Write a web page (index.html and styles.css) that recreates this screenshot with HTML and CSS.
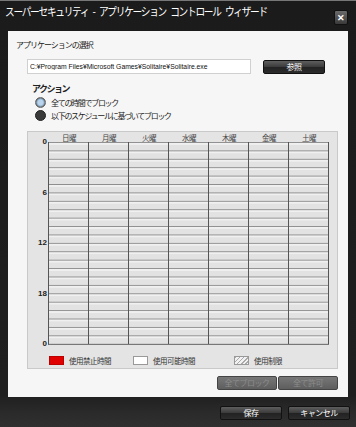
FILE: index.html
```html
<html lang="ja">
<head>
    <meta charset="UTF-8">
    <title>アプリケーション コントロール ウィザード</title>
    <link rel="stylesheet" href="styles.css">
</head>
<body>

<div id="window">
  <div id="titlebar">
    <span class="title">スーパーセキュリティ - アプリケーション コントロール ウィザード</span>
    <span class="close">&#x2715;</span>
  </div>

  <div id="panel">
    <p class="label">アプリケーションの選択</p>
    <div class="pathrow">
      <input type="text" class="path" value="C:¥Program Files¥Microsoft Games¥Solitaire¥Solitaire.exe">
      <button class="btn browse">参照</button>
    </div>

    <p class="heading">アクション</p>
    <div class="radio"><span class="dot on"></span>全ての時間でブロック</div>
    <div class="radio"><span class="dot"></span>以下のスケジュールに基づいてブロック</div>

    <div id="chart">
      <div class="days">
        <span>日曜</span><span>月曜</span><span>火曜</span><span>水曜</span><span>木曜</span><span>金曜</span><span>土曜</span>
      </div>
      <div class="plot">
        <div class="hours">
          <span>0</span><span>6</span><span>12</span><span>18</span><span>0</span>
        </div>
        <div class="grid">
          <div></div><div></div><div></div><div></div><div></div><div></div><div></div>
        </div>
      </div>
      <div class="legend">
        <span class="key"><i class="sw red"></i>使用禁止時間</span>
        <span class="key"><i class="sw white"></i>使用可能時間</span>
        <span class="key"><i class="sw hatch"></i>使用制限</span>
      </div>
    </div>

    <div class="actions">
      <button class="btn off">全てブロック</button>
      <button class="btn off">全て許可</button>
    </div>
  </div>

  <div id="footer">
    <button class="btn">保存</button>
    <button class="btn">キャンセル</button>
  </div>
</div>

</body>
</html>
```

FILE: styles.css
```css
body{
  margin:0;
  background-color:#1d1d1d;
  font-family:"Noto Sans CJK JP","Liberation Sans",sans-serif;
  color:#222;
}
#window{
  width:356px;
  height:427px;
  background:linear-gradient(#1b1b1b 0, #1f1f1f 395px, #2a2a2a 412px, #303030 427px);
  box-sizing:border-box;
}
#titlebar{
  height:31px;
  display:flex;
  justify-content:space-between;
  padding:0 8px 0 5px;
  border-top:1px solid #777;
  box-sizing:border-box;
}
.title{
  color:#fff;
  font-size:11.5px;
  line-height:20px;
  letter-spacing:-1.5px;
  word-spacing:4px;
  white-space:nowrap;
  transform:scaleX(0.84);
  transform-origin:left center;
}
.close{
  margin-top:9px;
  width:12px;
  height:13px;
  background:linear-gradient(#6a6a6a,#3a3a3a);
  border:1px solid #111;
  border-radius:2px;
  color:#fff;
  font-size:9px;
  font-weight:bold;
  line-height:13px;
  text-align:center;
}

#panel{
  margin:0 8px;
  height:366px;
  background-color:#f6f6f6;
  padding:8px 10px 0 8px;
  box-sizing:border-box;
}
p{
  margin:0;
}
.label{
  font-size:8px;
  letter-spacing:-1px;
  line-height:12px;
}
.pathrow{
  display:flex;
  align-items:center;
  margin:8px 0 0 11px;
}
.path{
  width:224px;
  height:15px;
  border:1px solid #d0d0d0;
  background:#fff;
  font-family:"Liberation Sans",sans-serif;
  font-size:6.8px;
  padding:0 2px;
  box-sizing:border-box;
  color:#111;
}
.btn{
  background:linear-gradient(#5e5e5e,#3a3a3a 50%,#222 51%,#2c2c2c);
  border:1px solid #111;
  border-radius:2px;
  color:#fff;
  font-family:"Noto Sans CJK JP",sans-serif;
  font-size:8px;
  letter-spacing:-0.5px;
  height:14px;
  width:62px;
  padding:0;
  line-height:12px;
}
.browse{
  margin-left:12px;
}
.heading{
  margin:8px 0 0 16px;
  font-size:9px;
  font-weight:bold;
  letter-spacing:-1.5px;
  line-height:14px;
}
.radio{
  display:flex;
  align-items:center;
  margin-left:19px;
  font-size:8px;
  letter-spacing:-1.3px;
  line-height:13px;
}
.dot{
  width:9px;
  height:9px;
  border-radius:50%;
  background:#3a3a3a;
  border:1px solid #222;
  margin-right:5px;
}
.dot.on{
  background:radial-gradient(#b9d4ec 40%,#7fa2c0 60%,#6d6d6d 70%);
  border-color:#666;
}

#chart{
  margin:9px 0 0 11px;
  height:238px;
  background-color:#e4e4e4;
  border:1px solid #c9c9c9;
  box-sizing:border-box;
  padding:1px 0 0 20px;
}
.days{
  display:flex;
  height:9px;
  padding-left:1px;
}
.days span{
  width:40px;
  text-align:center;
  font-size:7.5px;
  letter-spacing:-0.5px;
  line-height:9px;
  color:#444;
}
.plot{
  display:flex;
  margin-left:-20px;
}
.hours{
  width:19px;
  height:212px;
  margin-top:-5px;
  display:flex;
  flex-direction:column;
  justify-content:space-between;
  align-items:flex-end;
  padding-right:1px;
}
.hours span{
  font-family:"Liberation Sans",sans-serif;
  font-size:8px;
  line-height:10px;
  font-weight:bold;
  color:#222;
}
.grid{
  display:flex;
  height:202px;
  border-left:1px solid #555;
  border-bottom:1px solid #777;
  background:linear-gradient(#8e8e8e 0 1px,#f0f0f0 1px 3px,#e2e2e2 3px);
  background-size:100% 8.42px;
}
.grid div{
  width:39px;
  border-right:1px solid #555;
}
.legend{
  display:flex;
  margin-top:7px;
  padding-left:1px;
  font-size:7.5px;
  letter-spacing:-0.5px;
  line-height:9px;
  color:#333;
}
.key{
  display:flex;
  align-items:center;
  width:84px;
}
.key:nth-child(2){
  width:101px;
}
.sw{
  width:13px;
  height:7px;
  margin-right:5px;
  border:1px solid #999;
}
.sw.red{
  background:#e00000;
  border-color:#b00;
}
.sw.white{
  background:#fff;
}
.sw.hatch{
  background:repeating-linear-gradient(135deg,#aaa 0 1px,#f2f2f2 1px 3px);
}
.actions{
  display:flex;
  justify-content:flex-end;
  gap:1px;
  margin-top:7px;
}
.actions .btn{
  width:60px;
}
.btn.off{
  background:linear-gradient(#777,#5e5e5e);
  border-color:#444;
  color:#8c8c8c;
}

#footer{
  display:flex;
  justify-content:flex-end;
  gap:6px;
  padding:9px 6px 0 0;
}
```
